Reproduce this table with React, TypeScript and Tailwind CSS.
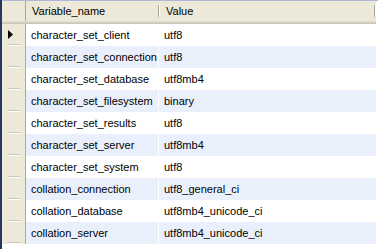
import React from 'react';

const rows: [string, string][] = [
  ['character_set_client', 'utf8'],
  ['character_set_connection', 'utf8'],
  ['character_set_database', 'utf8mb4'],
  ['character_set_filesystem', 'binary'],
  ['character_set_results', 'utf8'],
  ['character_set_server', 'utf8mb4'],
  ['character_set_system', 'utf8'],
  ['collation_connection', 'utf8_general_ci'],
  ['collation_database', 'utf8mb4_unicode_ci'],
  ['collation_server', 'utf8mb4_unicode_ci'],
];

function HeaderCell({ label, width }: { label: string; width: string }) {
  return (
    <div className={`${width} h-full flex items-center relative`}>
      <span className="pl-[6px]">{label}</span>
      <div className="absolute right-0 top-[4px] bottom-[4px] w-[2px] border-l border-[#aca899] bg-white" />
    </div>
  );
}

export default function App() {
  return (
    <div className="w-[378px] h-[249px] bg-white flex overflow-hidden font-['Liberation_Sans',Arial,sans-serif] text-[11px] text-black leading-none">
      <div className="w-[2px] bg-[#26385c]" />
      <div className="flex-1 flex flex-col">
        <div className="h-[1px] bg-[#b0b6d8]" />
        <div className="flex">
          <div className="w-[374px] flex flex-col">
            {/* header */}
            <div className="h-[23px] flex flex-col bg-[#ece9d8]">
              <div className="flex-1 flex">
                <div className="w-[24px] border-r border-[#aca899]" />
                <HeaderCell label="Variable_name" width="w-[134px]" />
                <HeaderCell label="Value" width="w-[216px]" />
              </div>
              <div className="h-[1px] bg-[#e2decd]" />
              <div className="h-[1px] bg-[#d6d2c2]" />
              <div className="h-[1px] bg-[#cbc7b8]" />
            </div>
            {/* rows */}
            {rows.map(([name, value], i) => (
              <div key={name} className={`h-[22px] flex ${i % 2 ? 'bg-[#eaf0fb]' : 'bg-white'}`}>
                <div className="w-[24px] bg-[#ece9d8] border-r border-[#aca899] flex flex-col">
                  <div className="flex-1 flex items-center pl-[6px]">
                    {i === 0 && (
                      <svg width="5" height="9" viewBox="0 0 5 9">
                        <polygon points="0,0 5,4.5 0,9" fill="#000" />
                      </svg>
                    )}
                  </div>
                  <div className="mx-[5px] h-[2px] border-t border-[#cbc7b8] bg-white" />
                </div>
                <div className="w-[133px] border-r border-white flex items-center pl-[5px] whitespace-nowrap">
                  {name}
                </div>
                <div className="flex-1 flex items-center pl-[5px] whitespace-nowrap">{value}</div>
              </div>
            ))}
          </div>
        </div>
      </div>
    </div>
  );
}
